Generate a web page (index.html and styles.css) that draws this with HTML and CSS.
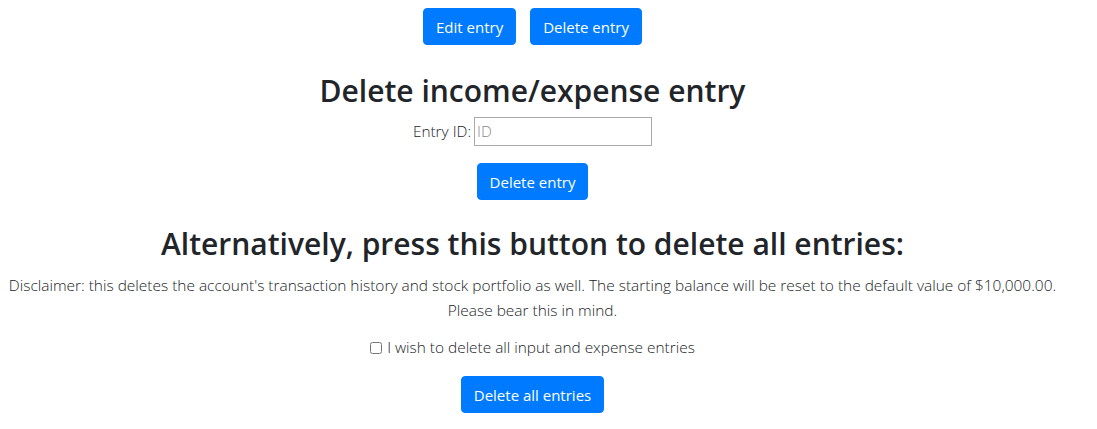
FILE: index.html
```html
<!DOCTYPE html>
<html lang="en">
<head>
<meta charset="utf-8">
<title>Delete entry</title>
<link rel="stylesheet" href="styles.css">
</head>
<body>
<main class="page">
  <div class="top-actions">
    <button class="btn">Edit entry</button>
    <button class="btn">Delete entry</button>
  </div>

  <section class="delete-one">
    <h2 class="title">Delete income/expense entry</h2>
    <div class="field">
      <label for="entry-id">Entry ID:</label>
      <input id="entry-id" class="input" type="text" placeholder="ID">
    </div>
    <button class="btn btn-mid">Delete entry</button>
  </section>

  <section class="delete-all">
    <h2 class="title title-alt">Alternatively, press this button to delete all entries:</h2>
    <p class="disclaimer">Disclaimer: this deletes the account's transaction history and stock portfolio as well. The starting balance will be reset to the default value of $10,000.00.<br>Please bear this in mind.</p>
    <label class="check"><input type="checkbox" class="checkbox"> I wish to delete all input and expense entries</label>
    <button class="btn btn-bottom">Delete all entries</button>
  </section>
</main>
</body>
</html>
```

FILE: styles.css
```css
* { box-sizing: border-box; }
html, body { margin: 0; padding: 0; background: #fff; }
body {
  font-family: "Open Sans", "Noto Sans", sans-serif;
  font-size: 16px;
  line-height: 24px;
  font-weight: 300;
  color: #212529;
}
.page {
  width: 1065px;
  display: flex;
  flex-direction: column;
  align-items: center;
  text-align: center;
}
.top-actions {
  display: flex;
  gap: 14px;
  padding-top: 8px;
}
.btn {
  font-family: inherit;
  font-size: 15px;
  line-height: 24px;
  font-weight: 400;
  color: #fff;
  background: #007bff;
  border: 1px solid #007bff;
  border-radius: 4px;
  padding: 6px 12px;
  height: 37px;
  cursor: pointer;
}
.delete-one, .delete-all {
  display: flex;
  flex-direction: column;
  align-items: center;
}
.title {
  font-size: 30px;
  font-weight: 600;
  line-height: 38px;
  margin: 0;
  color: #212529;
}
.delete-one .title { margin-top: 27px; }
.field {
  display: flex;
  align-items: center;
  gap: 3px;
  margin-top: 7px;
  font-size: 15.4px;
}
.input {
  width: 178px;
  height: 29px;
  border: 1px solid #a9a9a9;
  font-family: inherit;
  font-weight: 300;
  font-size: 15.4px;
  padding: 1px 2px;
  color: #212529;
}
.input::placeholder { color: #8a8a8a; }
.btn-mid { margin-top: 17px; }
.title-alt { margin-top: 25px; }
.disclaimer {
  margin: 10px 0 0;
  font-size: 15.45px;
  line-height: 25px;
  padding: 0;
  white-space: nowrap;
}
.check {
  margin-top: 13px;
  font-size: 15.4px;
  display: flex;
  align-items: center;
  gap: 5px;
}
.checkbox {
  margin: 0;
  width: 12px;
  height: 12px;
  accent-color: #888;
}
.btn-bottom { margin-top: 16px; }
```
